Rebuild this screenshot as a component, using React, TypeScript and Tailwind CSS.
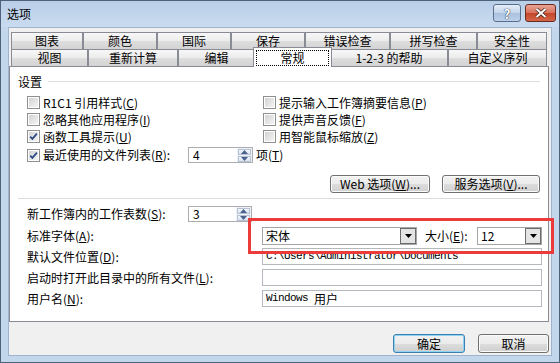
import type { ReactNode } from "react";

const topTabs = [
  { label: "图表", w: "w-[72px]" },
  { label: "颜色", w: "w-[74px]" },
  { label: "国际", w: "w-[74px]" },
  { label: "保存", w: "w-[74px]" },
  { label: "错误检查", w: "w-[85px]" },
  { label: "拼写检查", w: "w-[87px]" },
  { label: "安全性", w: "w-[70px]" },
];

function Acc({ k }: { k: string }) {
  return (
    <span>
      (<u className="underline-offset-1">{k}</u>)
    </span>
  );
}

function Tab({ label, w }: { label: string; w: string }) {
  return (
    <div
      className={`${w} h-full shrink-0 flex items-center justify-center border border-b-0 border-[#898c95] bg-[linear-gradient(#f7f7f7,#ececec_50%,#dedede_50%,#d3d3d3)] leading-none`}
    >
      {label}
    </div>
  );
}

function CheckBox({ checked }: { checked?: boolean }) {
  return (
    <div className="w-[13px] h-[13px] shrink-0 border border-[#8e8f8f] bg-white p-[1px]">
      <div className="w-full h-full bg-[linear-gradient(135deg,#d3d3d3,#f4f4f4)] flex items-center justify-center">
        {checked && (
          <svg width="9" height="9" viewBox="0 0 9 9">
            <path d="M1.2 4.6 L3.4 6.9 L7.9 1.6" fill="none" stroke="#2c4a86" strokeWidth="1.7" />
          </svg>
        )}
      </div>
    </div>
  );
}

function Check({ checked, children }: { checked?: boolean; children: ReactNode }) {
  return (
    <div className="h-[17px] flex items-center gap-[3px] leading-none whitespace-nowrap">
      <CheckBox checked={checked} />
      <span>{children}</span>
    </div>
  );
}

function Spin({ value, w }: { value: string; w: string }) {
  return (
    <div className={`${w} h-[16px] shrink-0 border border-[#abadb3] bg-white flex`}>
      <div className="flex-1 pl-[4px] flex items-center leading-none">{value}</div>
      <div className="w-[15px] flex flex-col p-[1px] gap-[1px] bg-[#eef2f7]">
        <div className="flex-1 flex items-center justify-center border border-[#b7c3d2] bg-[linear-gradient(#f4f7fb,#d9e2ed)]">
          <svg width="7" height="4" viewBox="0 0 7 4">
            <path d="M0 4 L3.5 0 L7 4 Z" fill="#4a638e" />
          </svg>
        </div>
        <div className="flex-1 flex items-center justify-center border border-[#b7c3d2] bg-[linear-gradient(#f4f7fb,#d9e2ed)]">
          <svg width="7" height="4" viewBox="0 0 7 4">
            <path d="M0 0 L3.5 4 L7 0 Z" fill="#4a638e" />
          </svg>
        </div>
      </div>
    </div>
  );
}

function Combo({ value, w }: { value: string; w: string }) {
  return (
    <div className={`${w} h-[18px] shrink-0 border border-[#a5a5a5] bg-white flex`}>
      <div className="flex-1 pl-[3px] flex items-center leading-none">{value}</div>
      <div className="w-[16px] h-full border border-[#6d6d6d] bg-[#e4e4e4] flex items-center justify-center">
        <svg width="7" height="4" viewBox="0 0 7 4">
          <path d="M0 0 L3.5 4 L7 0 Z" fill="#000" />
        </svg>
      </div>
    </div>
  );
}

function Field({ children }: { children?: ReactNode }) {
  return (
    <div className="w-[280px] h-[17px] shrink-0 border border-[#b5b8bf] bg-white flex items-center pl-[3px] leading-none whitespace-nowrap">
      {children}
    </div>
  );
}

function Mono({ children }: { children: ReactNode }) {
  return <span className="text-[11px] tracking-[-0.6px] [font-family:'Liberation_Mono',monospace]">{children}</span>;
}

function Button({ children, w, primary }: { children: ReactNode; w: string; primary?: boolean }) {
  return (
    <div
      className={`${w} shrink-0 rounded-[3px] border ${
        primary ? "border-[#3c7fb1] shadow-[inset_0_0_0_1px_#8fd3f3]" : "border-[#707070] shadow-[inset_0_0_0_1px_#fbfbfb]"
      } bg-[linear-gradient(#f2f2f2,#ebebeb_50%,#dddddd_50%,#cfcfcf)] flex items-center justify-center leading-none whitespace-nowrap`}
    >
      {children}
    </div>
  );
}

function Row({ label, children }: { label: ReactNode; children: ReactNode }) {
  return (
    <div className="h-[21px] flex items-start">
      <div className="w-[235px] shrink-0 h-[17px] flex items-center leading-none whitespace-nowrap">{label}</div>
      {children}
    </div>
  );
}

export default function App() {
  return (
    <div className="w-[560px] h-[363px] relative overflow-hidden bg-[#c2d6ec] border border-[#50627a] flex flex-col text-[12px] text-black [font-family:'Noto_Sans_CJK_SC',sans-serif]">
      {/* title bar */}
      <div className="h-[26px] shrink-0 flex items-start pl-[6px] pr-[3px] pt-[3px] bg-[linear-gradient(#b9cfe8,#c9dbef)]">
        <span className="leading-none mt-[4px]">选项</span>
        <div className="ml-auto flex gap-[4px]">
          <div className="w-[28px] h-[18px] rounded-[3px] border border-[#5a6f8c] bg-[linear-gradient(#e6eef8,#c3d4ea_50%,#a9c0df_50%,#bcd0ea)] flex items-center justify-center">
            <span className="text-white font-bold text-[13px] leading-none [text-shadow:0_0_1px_#1d2c44,0_0_1px_#1d2c44]">?</span>
          </div>
          <div className="w-[31px] h-[18px] rounded-[3px] border border-[#6b2a1f] bg-[linear-gradient(#e8a493,#d7705c_50%,#c44427_50%,#d4664a)] flex items-center justify-center">
            <svg width="12" height="10" viewBox="0 0 12 10">
              <path d="M1.5 1 L10.5 9 M10.5 1 L1.5 9" stroke="#3a1a14" strokeWidth="3.4" />
              <path d="M1.5 1 L10.5 9 M10.5 1 L1.5 9" stroke="#fff" strokeWidth="2" />
            </svg>
          </div>
        </div>
      </div>

      {/* client area */}
      <div className="flex-1 mx-[7px] mb-[6px] bg-[#f0f0f0] border border-[#9fb3cc] flex flex-col pt-[4px]">
        <div className="ml-[2px] w-[536px] h-[17px] flex">
          {topTabs.map((t) => (
            <Tab key={t.label} label={t.label} w={t.w} />
          ))}
        </div>
        <div className="ml-[2px] w-[536px] h-[17px] flex">
          <Tab label="视图" w="w-[77px]" />
          <Tab label="重新计算" w="w-[90px]" />
          <Tab label="编辑" w="w-[77px]" />
          <div className="w-[79px] -mx-[2px] h-[20px] -mt-[2px] relative z-10 shrink-0 bg-white border border-b-0 border-[#898c95] pt-[2px] px-[2px] pb-[1px]">
            <div className="h-full border border-dotted border-black flex items-center justify-center leading-none">常规</div>
          </div>
          <Tab label="1-2-3 的帮助" w="w-[118px]" />
          <Tab label="自定义序列" w="w-[99px]" />
        </div>

        {/* tab page */}
        <div className="w-[540px] h-[256px] border border-[#898c95] bg-white flex flex-col pt-[6px]">
          <div className="h-[17px] flex items-center pl-[8px] pr-[8px]">
            <span className="leading-none">设置</span>
            <div className="flex-1 h-px bg-[#dcdcdc] ml-[6px]" />
          </div>

          <div className="mt-[4px] flex">
            <div className="w-[253px] shrink-0 pl-[17px] flex flex-col">
              <Check>
                R1C1 引用样式<Acc k="C" />
              </Check>
              <Check>
                忽略其他应用程序<Acc k="I" />
              </Check>
              <Check checked>
                函数工具提示<Acc k="U" />
              </Check>
              <div className="mt-[1px] h-[18px] flex items-center leading-none whitespace-nowrap">
                <CheckBox checked />
                <span className="ml-[3px] w-[145px] shrink-0">
                  最近使用的文件列表<Acc k="R" />:
                </span>
                <Spin value="4" w="w-[65px]" />
                <span className="ml-[3px] shrink-0">
                  项<Acc k="T" />
                </span>
              </div>
            </div>
            <div className="flex flex-col">
              <Check>
                提示输入工作簿摘要信息<Acc k="P" />
              </Check>
              <Check>
                提供声音反馈<Acc k="F" />
              </Check>
              <Check>
                用智能鼠标缩放<Acc k="Z" />
              </Check>
            </div>
          </div>

          <div className="mt-[11px] h-[18px] flex justify-end gap-[12px] pr-[8px]">
            <Button w="w-[100px]">
              Web 选项<Acc k="W" />...
            </Button>
            <Button w="w-[98px]">
              服务选项<Acc k="V" />...
            </Button>
          </div>

          <div className="mt-[5px] mx-[8px] h-px bg-[#dcdcdc]" />

          <div className="mt-[7px] pl-[17px] flex flex-col">
            <div className="h-[21px] flex items-start">
              <div className="w-[161px] shrink-0 h-[16px] flex items-center leading-none whitespace-nowrap">
                新工作簿内的工作表数<Acc k="S" />:
              </div>
              <Spin value="3" w="w-[64px]" />
            </div>
            <div className="h-[21px] flex items-start">
              <div className="w-[235px] shrink-0 h-[18px] flex items-center leading-none">
                标准字体<Acc k="A" />:
              </div>
              <Combo value="宋体" w="w-[155px]" />
              <div className="ml-[8px] w-[52px] h-[18px] flex items-center leading-none whitespace-nowrap">
                大小<Acc k="E" />:
              </div>
              <Combo value="12" w="w-[65px]" />
            </div>
            <Row
              label={
                <>
                  默认文件位置<Acc k="D" />:
                </>
              }
            >
              <Field>
                <Mono>C:\Users\Administrator\Documents</Mono>
              </Field>
            </Row>
            <Row
              label={
                <>
                  启动时打开此目录中的所有文件<Acc k="L" />:
                </>
              }
            >
              <Field />
            </Row>
            <Row
              label={
                <>
                  用户名<Acc k="N" />:
                </>
              }
            >
              <Field>
                <Mono>Windows&nbsp;</Mono>
                <span>用户</span>
              </Field>
            </Row>
          </div>
        </div>

        <div className="mt-[12px] h-[19px] flex justify-end gap-[13px] pr-[2px]">
          <Button w="w-[72px]" primary>
            确定
          </Button>
          <Button w="w-[71px]">取消</Button>
        </div>
      </div>

      {/* red annotation box */}
      <div className="absolute left-[247px] top-[217px] w-[306px] h-[36px] border-[3px] border-[#ec3b3b]" />
    </div>
  );
}
